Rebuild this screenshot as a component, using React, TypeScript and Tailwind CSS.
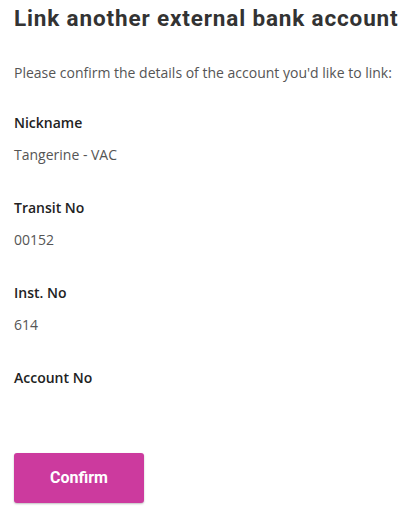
import React from "react";

export default function App() {
  const rows = [
    { label: "Nickname", value: "Tangerine - VAC" },
    { label: "Transit No", value: "00152" },
    { label: "Inst. No", value: "614" },
    { label: "Account No", value: "" },
  ];
  return (
    <div
      className="w-[415px] h-[512px] bg-white px-[14px] pt-[2px] overflow-hidden"
      style={{ fontFamily: '"Open Sans", sans-serif' }}
    >
      <h1
        className="whitespace-nowrap text-[22.5px] leading-[32px] font-bold text-[#333333] tracking-[0.85px]"
        style={{ fontFamily: 'Roboto, sans-serif' }}
      >
        Link another external bank account
      </h1>
      <p className="mt-[29px] text-[14px] leading-[20px] text-[#555555]">
        Please confirm the details of the account you'd like to link:
      </p>
      <div className="mt-[30px] flex flex-col">
        {rows.map((r) => (
          <div key={r.label} className="h-[85px]">
            <div className="text-[14px] leading-[20px] font-semibold text-[#222222]">{r.label}</div>
            <div className="mt-[12px] text-[14px] leading-[20px] text-[#555555]">{r.value}</div>
          </div>
        ))}
      </div>
      <button
        className="mt-0 w-[130px] h-[50px] rounded-[3px] bg-[#cc3a9e] text-white text-[16px] font-bold shadow-[0_1px_2px_rgba(0,0,0,0.25)]"
        style={{ fontFamily: 'Roboto, sans-serif' }}
      >
        Confirm
      </button>
    </div>
  );
}
